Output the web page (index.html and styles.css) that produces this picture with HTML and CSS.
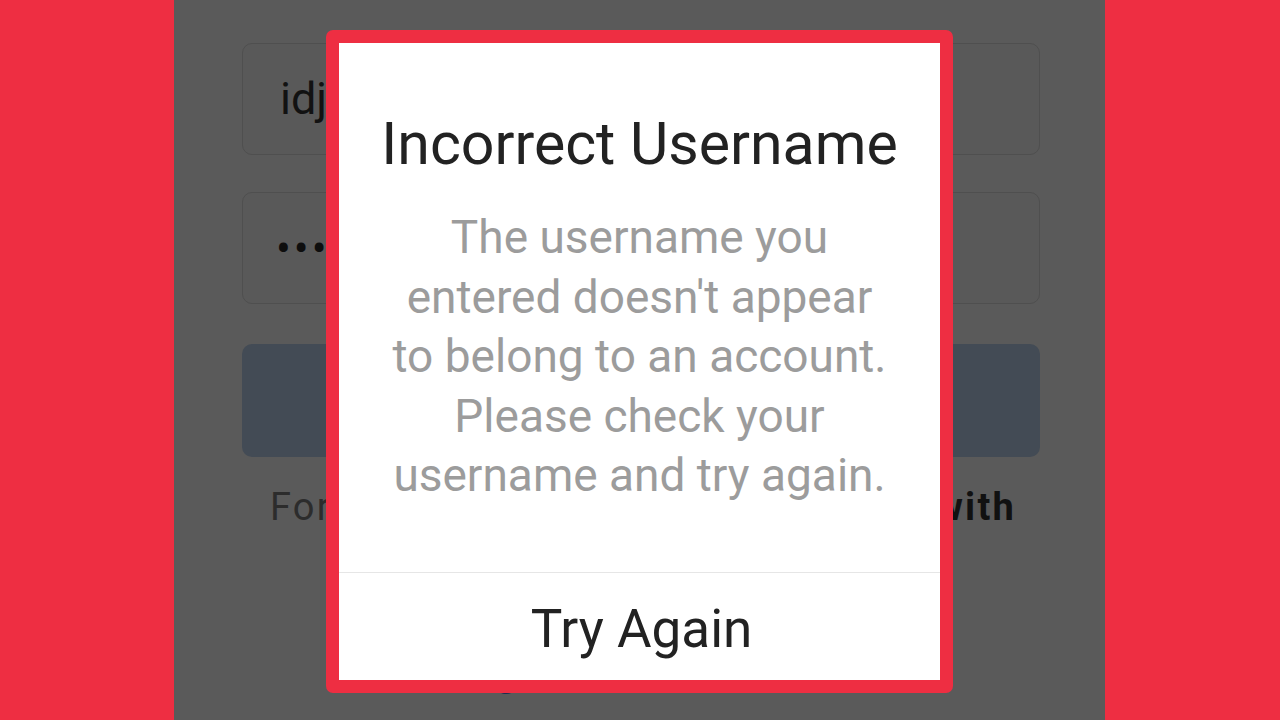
FILE: index.html
```html
<!DOCTYPE html>
<html lang="en">
<head>
<meta charset="utf-8">
<title>Incorrect Username</title>
<link rel="stylesheet" href="styles.css">
</head>
<body>
<div class="stage">
  <div class="phone">
    <div class="field"><span class="field-text">idjdhsjsjsjdk</span></div>
    <div class="field"><span class="field-dots">••••••••••</span></div>
    <div class="login-btn"></div>
    <p class="help">Forgot your login details? <b>Get help with</b><br><b>logging in.</b></p>
    <p class="fb">Log in with Facebook</p>
  </div>
</div>
<div class="dialog">
  <div class="dialog-inner">
    <h1 class="dialog-title">Incorrect Username</h1>
    <p class="dialog-body">The username you<br>entered doesn't appear<br>to belong to an account.<br>Please check your<br>username and try again.</p>
    <div class="dialog-action">Try Again</div>
  </div>
</div>
</body>
</html>
```
FILE: styles.css
```css
* { box-sizing: border-box; }
html, body { margin: 0; padding: 0; }
body {
  width: 1280px;
  height: 720px;
  overflow: hidden;
  background: #ee2e42;
  font-family: Roboto, "Noto Sans", sans-serif;
  position: relative;
}
.stage {
  display: flex;
  height: 720px;
  padding-left: 174px;
}
.phone {
  width: 931px;
  height: 720px;
  background: #5a5a5a;
  padding: 43px 65px 0 68px;
  display: flex;
  flex-direction: column;
  overflow: hidden;
}
.field {
  height: 112px;
  border: 1.5px solid #4f4f4f;
  border-radius: 10px;
  background: #595959;
  display: flex;
  align-items: center;
  padding-left: 37px;
  margin-bottom: 37px;
  flex-shrink: 0;
}
.field-text {
  font-size: 45px;
  color: #121212;
  line-height: 1;
  margin-top: -2px;
}
.field-dots {
  font-size: 44px;
  color: #0e0e0e;
  letter-spacing: 3px;
  line-height: 1;
  margin-top: 2px;
  margin-left: -4px;
}
.login-btn {
  height: 113px;
  border-radius: 10px;
  background: #434b55;
  margin-top: 3px;
  flex-shrink: 0;
}
.help {
  margin: 26px 0 0 -69px;
  width: 940px;
  text-align: center;
  font-size: 38px;
  letter-spacing: 2.2px;
  line-height: 48px;
  color: #2c2c2c;
  white-space: nowrap;
}
.help b { color: #111; font-weight: 700; }
.fb {
  margin: 70px 0 0 0;
  text-align: center;
  font-size: 40px;
  font-weight: 700;
  line-height: 48px;
  color: #1c2f4f;
}
.dialog {
  position: absolute;
  left: 326px;
  top: 30px;
  width: 627px;
  height: 663px;
  border: 13px solid #ee2e42;
  border-radius: 7px;
  background: #ee2e42;
}
.dialog-inner {
  background: #ffffff;
  height: 100%;
  display: flex;
  flex-direction: column;
}
.dialog-title {
  margin: 66px 0 0 0;
  font-size: 59px;
  font-weight: 400;
  line-height: 70px;
  color: #222222;
  text-align: center;
  white-space: nowrap;
}
.dialog-body {
  margin: 29px 0 0 0;
  font-size: 46px;
  line-height: 59.5px;
  color: #9c9c9c;
  text-align: center;
  white-space: nowrap;
}
.dialog-action {
  margin-top: auto;
  height: 108px;
  border-top: 1.5px solid #e6e6e6;
  display: flex;
  align-items: center;
  justify-content: center;
  font-size: 53px;
  color: #222222;
  padding-top: 4px;
  padding-left: 4px;
}
```
